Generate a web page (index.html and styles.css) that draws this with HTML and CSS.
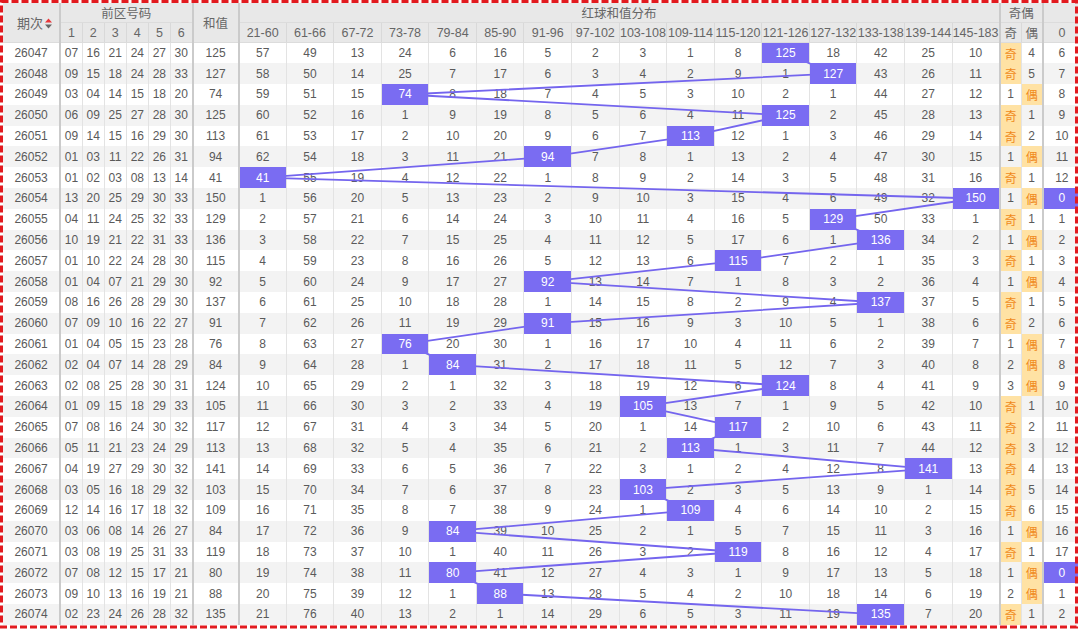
FILE: index.html
```html
<!DOCTYPE html>
<html lang="zh-CN">
<head>
<meta charset="utf-8">
<title>红球和值分布走势</title>
<link rel="stylesheet" href="styles.css">
</head>
<body>
<div class="board">
<table class="chart">
<colgroup>
<col class="c-id">
<col class="c-n"><col class="c-n"><col class="c-n"><col class="c-n"><col class="c-n"><col class="c-n">
<col class="c-sum">
<col class="c-d"><col class="c-d"><col class="c-d"><col class="c-d"><col class="c-d"><col class="c-d"><col class="c-d"><col class="c-d">
<col class="c-d"><col class="c-d"><col class="c-d"><col class="c-d"><col class="c-d"><col class="c-d"><col class="c-d"><col class="c-d">
<col class="c-oe"><col class="c-oe">
<col class="c-z">
</colgroup>
<thead>
<tr class="top">
<th rowspan="2" class="qc">期次<svg class="sort" width="7" height="11" viewBox="0 0 7 11"><polygon points="0,4.5 3.5,0.5 7,4.5" fill="#e8363a"/><polygon points="0,6.5 3.5,10.5 7,6.5" fill="#666"/></svg></th>
<th colspan="6" class="g">前区号码</th>
<th rowspan="2" class="g">和值</th>
<th colspan="16" class="g">红球和值分布</th>
<th colspan="2" class="g">奇偶</th>
<th class="g"></th>
</tr>
<tr class="sub">
<th class="g">1</th><th>2</th><th>3</th><th>4</th><th>5</th><th>6</th>
<th class="g">21-60</th><th>61-66</th><th>67-72</th><th>73-78</th><th>79-84</th><th>85-90</th><th>91-96</th><th>97-102</th><th>103-108</th><th>109-114</th><th>115-120</th><th>121-126</th><th>127-132</th><th>133-138</th><th>139-144</th><th>145-183</th>
<th class="g">奇</th><th>偶</th>
<th class="g">0</th>
</tr>
</thead>
<tbody>
<tr><td>26047</td><td>07</td><td>16</td><td>21</td><td>24</td><td>27</td><td>30</td><td>125</td><td>57</td><td>49</td><td>13</td><td>24</td><td>6</td><td>16</td><td>5</td><td>2</td><td>3</td><td>1</td><td>8</td><td class="h hit">125</td><td>18</td><td>42</td><td>25</td><td>10</td><td class="oe">奇</td><td>4</td><td>6</td></tr>
<tr><td>26048</td><td>09</td><td>15</td><td>18</td><td>24</td><td>28</td><td>33</td><td>127</td><td>58</td><td>50</td><td>14</td><td>25</td><td>7</td><td>17</td><td>6</td><td>3</td><td>4</td><td>2</td><td>9</td><td>1</td><td class="h hit">127</td><td>43</td><td>26</td><td>11</td><td class="oe">奇</td><td>5</td><td>7</td></tr>
<tr><td>26049</td><td>03</td><td>04</td><td>14</td><td>15</td><td>18</td><td>20</td><td>74</td><td>59</td><td>51</td><td>15</td><td class="h hit">74</td><td>8</td><td>18</td><td>7</td><td>4</td><td>5</td><td>3</td><td>10</td><td>2</td><td>1</td><td>44</td><td>27</td><td>12</td><td>1</td><td class="oe">偶</td><td>8</td></tr>
<tr><td>26050</td><td>06</td><td>09</td><td>25</td><td>27</td><td>28</td><td>30</td><td>125</td><td>60</td><td>52</td><td>16</td><td>1</td><td>9</td><td>19</td><td>8</td><td>5</td><td>6</td><td>4</td><td>11</td><td class="h hit">125</td><td>2</td><td>45</td><td>28</td><td>13</td><td class="oe">奇</td><td>1</td><td>9</td></tr>
<tr><td>26051</td><td>09</td><td>14</td><td>15</td><td>16</td><td>29</td><td>30</td><td>113</td><td>61</td><td>53</td><td>17</td><td>2</td><td>10</td><td>20</td><td>9</td><td>6</td><td>7</td><td class="h hit">113</td><td>12</td><td>1</td><td>3</td><td>46</td><td>29</td><td>14</td><td class="oe">奇</td><td>2</td><td>10</td></tr>
<tr><td>26052</td><td>01</td><td>03</td><td>11</td><td>22</td><td>26</td><td>31</td><td>94</td><td>62</td><td>54</td><td>18</td><td>3</td><td>11</td><td>21</td><td class="h hit">94</td><td>7</td><td>8</td><td>1</td><td>13</td><td>2</td><td>4</td><td>47</td><td>30</td><td>15</td><td>1</td><td class="oe">偶</td><td>11</td></tr>
<tr><td>26053</td><td>01</td><td>02</td><td>03</td><td>08</td><td>13</td><td>14</td><td>41</td><td class="h hit">41</td><td>55</td><td>19</td><td>4</td><td>12</td><td>22</td><td>1</td><td>8</td><td>9</td><td>2</td><td>14</td><td>3</td><td>5</td><td>48</td><td>31</td><td>16</td><td class="oe">奇</td><td>1</td><td>12</td></tr>
<tr><td>26054</td><td>13</td><td>20</td><td>25</td><td>29</td><td>30</td><td>33</td><td>150</td><td>1</td><td>56</td><td>20</td><td>5</td><td>13</td><td>23</td><td>2</td><td>9</td><td>10</td><td>3</td><td>15</td><td>4</td><td>6</td><td>49</td><td>32</td><td class="h hit">150</td><td>1</td><td class="oe">偶</td><td class="h">0</td></tr>
<tr><td>26055</td><td>04</td><td>11</td><td>24</td><td>25</td><td>32</td><td>33</td><td>129</td><td>2</td><td>57</td><td>21</td><td>6</td><td>14</td><td>24</td><td>3</td><td>10</td><td>11</td><td>4</td><td>16</td><td>5</td><td class="h hit">129</td><td>50</td><td>33</td><td>1</td><td class="oe">奇</td><td>1</td><td>1</td></tr>
<tr><td>26056</td><td>10</td><td>19</td><td>21</td><td>22</td><td>31</td><td>33</td><td>136</td><td>3</td><td>58</td><td>22</td><td>7</td><td>15</td><td>25</td><td>4</td><td>11</td><td>12</td><td>5</td><td>17</td><td>6</td><td>1</td><td class="h hit">136</td><td>34</td><td>2</td><td>1</td><td class="oe">偶</td><td>2</td></tr>
<tr><td>26057</td><td>01</td><td>10</td><td>22</td><td>24</td><td>28</td><td>30</td><td>115</td><td>4</td><td>59</td><td>23</td><td>8</td><td>16</td><td>26</td><td>5</td><td>12</td><td>13</td><td>6</td><td class="h hit">115</td><td>7</td><td>2</td><td>1</td><td>35</td><td>3</td><td class="oe">奇</td><td>1</td><td>3</td></tr>
<tr><td>26058</td><td>01</td><td>04</td><td>07</td><td>21</td><td>29</td><td>30</td><td>92</td><td>5</td><td>60</td><td>24</td><td>9</td><td>17</td><td>27</td><td class="h hit">92</td><td>13</td><td>14</td><td>7</td><td>1</td><td>8</td><td>3</td><td>2</td><td>36</td><td>4</td><td>1</td><td class="oe">偶</td><td>4</td></tr>
<tr><td>26059</td><td>08</td><td>16</td><td>26</td><td>28</td><td>29</td><td>30</td><td>137</td><td>6</td><td>61</td><td>25</td><td>10</td><td>18</td><td>28</td><td>1</td><td>14</td><td>15</td><td>8</td><td>2</td><td>9</td><td>4</td><td class="h hit">137</td><td>37</td><td>5</td><td class="oe">奇</td><td>1</td><td>5</td></tr>
<tr><td>26060</td><td>07</td><td>09</td><td>10</td><td>16</td><td>22</td><td>27</td><td>91</td><td>7</td><td>62</td><td>26</td><td>11</td><td>19</td><td>29</td><td class="h hit">91</td><td>15</td><td>16</td><td>9</td><td>3</td><td>10</td><td>5</td><td>1</td><td>38</td><td>6</td><td class="oe">奇</td><td>2</td><td>6</td></tr>
<tr><td>26061</td><td>01</td><td>04</td><td>05</td><td>15</td><td>23</td><td>28</td><td>76</td><td>8</td><td>63</td><td>27</td><td class="h hit">76</td><td>20</td><td>30</td><td>1</td><td>16</td><td>17</td><td>10</td><td>4</td><td>11</td><td>6</td><td>2</td><td>39</td><td>7</td><td>1</td><td class="oe">偶</td><td>7</td></tr>
<tr><td>26062</td><td>02</td><td>04</td><td>07</td><td>14</td><td>28</td><td>29</td><td>84</td><td>9</td><td>64</td><td>28</td><td>1</td><td class="h hit">84</td><td>31</td><td>2</td><td>17</td><td>18</td><td>11</td><td>5</td><td>12</td><td>7</td><td>3</td><td>40</td><td>8</td><td>2</td><td class="oe">偶</td><td>8</td></tr>
<tr><td>26063</td><td>02</td><td>08</td><td>25</td><td>28</td><td>30</td><td>31</td><td>124</td><td>10</td><td>65</td><td>29</td><td>2</td><td>1</td><td>32</td><td>3</td><td>18</td><td>19</td><td>12</td><td>6</td><td class="h hit">124</td><td>8</td><td>4</td><td>41</td><td>9</td><td>3</td><td class="oe">偶</td><td>9</td></tr>
<tr><td>26064</td><td>01</td><td>09</td><td>15</td><td>18</td><td>29</td><td>33</td><td>105</td><td>11</td><td>66</td><td>30</td><td>3</td><td>2</td><td>33</td><td>4</td><td>19</td><td class="h hit">105</td><td>13</td><td>7</td><td>1</td><td>9</td><td>5</td><td>42</td><td>10</td><td class="oe">奇</td><td>1</td><td>10</td></tr>
<tr><td>26065</td><td>07</td><td>08</td><td>16</td><td>24</td><td>30</td><td>32</td><td>117</td><td>12</td><td>67</td><td>31</td><td>4</td><td>3</td><td>34</td><td>5</td><td>20</td><td>1</td><td>14</td><td class="h hit">117</td><td>2</td><td>10</td><td>6</td><td>43</td><td>11</td><td class="oe">奇</td><td>2</td><td>11</td></tr>
<tr><td>26066</td><td>05</td><td>11</td><td>21</td><td>23</td><td>24</td><td>29</td><td>113</td><td>13</td><td>68</td><td>32</td><td>5</td><td>4</td><td>35</td><td>6</td><td>21</td><td>2</td><td class="h hit">113</td><td>1</td><td>3</td><td>11</td><td>7</td><td>44</td><td>12</td><td class="oe">奇</td><td>3</td><td>12</td></tr>
<tr><td>26067</td><td>04</td><td>19</td><td>27</td><td>29</td><td>30</td><td>32</td><td>141</td><td>14</td><td>69</td><td>33</td><td>6</td><td>5</td><td>36</td><td>7</td><td>22</td><td>3</td><td>1</td><td>2</td><td>4</td><td>12</td><td>8</td><td class="h hit">141</td><td>13</td><td class="oe">奇</td><td>4</td><td>13</td></tr>
<tr><td>26068</td><td>03</td><td>05</td><td>16</td><td>18</td><td>29</td><td>32</td><td>103</td><td>15</td><td>70</td><td>34</td><td>7</td><td>6</td><td>37</td><td>8</td><td>23</td><td class="h hit">103</td><td>2</td><td>3</td><td>5</td><td>13</td><td>9</td><td>1</td><td>14</td><td class="oe">奇</td><td>5</td><td>14</td></tr>
<tr><td>26069</td><td>12</td><td>14</td><td>16</td><td>17</td><td>18</td><td>32</td><td>109</td><td>16</td><td>71</td><td>35</td><td>8</td><td>7</td><td>38</td><td>9</td><td>24</td><td>1</td><td class="h hit">109</td><td>4</td><td>6</td><td>14</td><td>10</td><td>2</td><td>15</td><td class="oe">奇</td><td>6</td><td>15</td></tr>
<tr><td>26070</td><td>03</td><td>06</td><td>08</td><td>14</td><td>26</td><td>27</td><td>84</td><td>17</td><td>72</td><td>36</td><td>9</td><td class="h hit">84</td><td>39</td><td>10</td><td>25</td><td>2</td><td>1</td><td>5</td><td>7</td><td>15</td><td>11</td><td>3</td><td>16</td><td>1</td><td class="oe">偶</td><td>16</td></tr>
<tr><td>26071</td><td>03</td><td>08</td><td>19</td><td>25</td><td>31</td><td>33</td><td>119</td><td>18</td><td>73</td><td>37</td><td>10</td><td>1</td><td>40</td><td>11</td><td>26</td><td>3</td><td>2</td><td class="h hit">119</td><td>8</td><td>16</td><td>12</td><td>4</td><td>17</td><td class="oe">奇</td><td>1</td><td>17</td></tr>
<tr><td>26072</td><td>07</td><td>08</td><td>12</td><td>15</td><td>17</td><td>21</td><td>80</td><td>19</td><td>74</td><td>38</td><td>11</td><td class="h hit">80</td><td>41</td><td>12</td><td>27</td><td>4</td><td>3</td><td>1</td><td>9</td><td>17</td><td>13</td><td>5</td><td>18</td><td>1</td><td class="oe">偶</td><td class="h">0</td></tr>
<tr><td>26073</td><td>09</td><td>10</td><td>13</td><td>16</td><td>19</td><td>21</td><td>88</td><td>20</td><td>75</td><td>39</td><td>12</td><td>1</td><td class="h hit">88</td><td>13</td><td>28</td><td>5</td><td>4</td><td>2</td><td>10</td><td>18</td><td>14</td><td>6</td><td>19</td><td>2</td><td class="oe">偶</td><td>1</td></tr>
<tr><td>26074</td><td>02</td><td>23</td><td>24</td><td>26</td><td>28</td><td>32</td><td>135</td><td>21</td><td>76</td><td>40</td><td>13</td><td>2</td><td>1</td><td>14</td><td>29</td><td>6</td><td>5</td><td>3</td><td>11</td><td>19</td><td class="h hit">135</td><td>7</td><td>20</td><td class="oe">奇</td><td>1</td><td>2</td></tr>
</tbody>
</table>
<svg class="trend" width="1078" height="629"><polyline points="" fill="none" stroke="#7465ee" stroke-width="1.8" stroke-linejoin="round"/></svg>
<svg class="frame" width="1078" height="629"><rect x="1.5" y="1.5" width="1075" height="625.5" fill="none" stroke="#e21a1f" stroke-width="3" stroke-dasharray="7 3"/></svg>
</div>
<script src="script.js"></script>
</body>
</html>
```

FILE: styles.css
```css
* { box-sizing: border-box; }
html, body { margin: 0; padding: 0; background: #fff; }
body { font-family: "Liberation Sans", "Noto Sans CJK SC", sans-serif; }

.board {
  position: relative;
  width: 1078px;
  height: 629px;
  padding: 3px 0 0 3px;
  overflow: hidden;
}

.chart {
  border-collapse: collapse;
  table-layout: fixed;
  width: 1077px;
  font-size: 12px;
  color: #5a5a5a;
  text-align: center;
}

.c-id { width: 57px; }
.c-n { width: 22px; }
.c-sum { width: 46px; }
.c-d { width: 47.4375px; }
.c-oe { width: 21.5px; }
.c-z { width: 37px; }

.chart th {
  background: #e8e8e8;
  color: #666;
  font-weight: normal;
  padding: 0;
  border-left: 1px solid #d9d9d9;
  border-bottom: 1px solid #dcdcdc;
  white-space: nowrap;
  overflow: hidden;
}
.chart .top th { height: 19px; font-size: 12.5px; }
.chart .sub th { height: 18.6px; font-size: 12.5px; }
.chart th.qc { border-left: none; font-size: 13px; padding-left: 7px; }
.chart th.g { border-left: 2px solid #cbcbcb; }

.sort { vertical-align: -1px; margin-left: 2px; }

.chart td {
  padding: 0;
  height: 20.8px;
  border-left: 1px solid #e3e3e3;
  white-space: nowrap;
  overflow: hidden;
}
.chart tbody tr:nth-child(even) { background: #f3f3f3; }
.chart tbody td:nth-child(1) { border-left: none; }
.chart tbody td:nth-child(2),
.chart tbody td:nth-child(8),
.chart tbody td:nth-child(9),
.chart tbody td:nth-child(25),
.chart tbody td:nth-child(27) { border-left: 2px solid #cbcbcb; }

.chart td.h {
  position: relative;
  z-index: 2;
  background: #7a6cf2;
  color: #fff;
}
.chart td.oe {
  background: #ffe2a4;
  color: #f08a1c;
}

.trend {
  position: absolute;
  left: 0;
  top: 0;
  z-index: 1;
  pointer-events: none;
}
.frame {
  position: absolute;
  left: 0;
  top: 0;
  z-index: 3;
  pointer-events: none;
}
```

FILE: script.js
```js
(function () {
  var board = document.querySelector('.board');
  var line = document.querySelector('.trend polyline');
  var b = board.getBoundingClientRect();
  var pts = [];
  document.querySelectorAll('.chart td.hit').forEach(function (td) {
    var r = td.getBoundingClientRect();
    pts.push((r.left + r.width / 2 - b.left).toFixed(1) + ',' + (r.top + r.height / 2 - b.top).toFixed(1));
  });
  line.setAttribute('points', pts.join(' '));
})();
```
